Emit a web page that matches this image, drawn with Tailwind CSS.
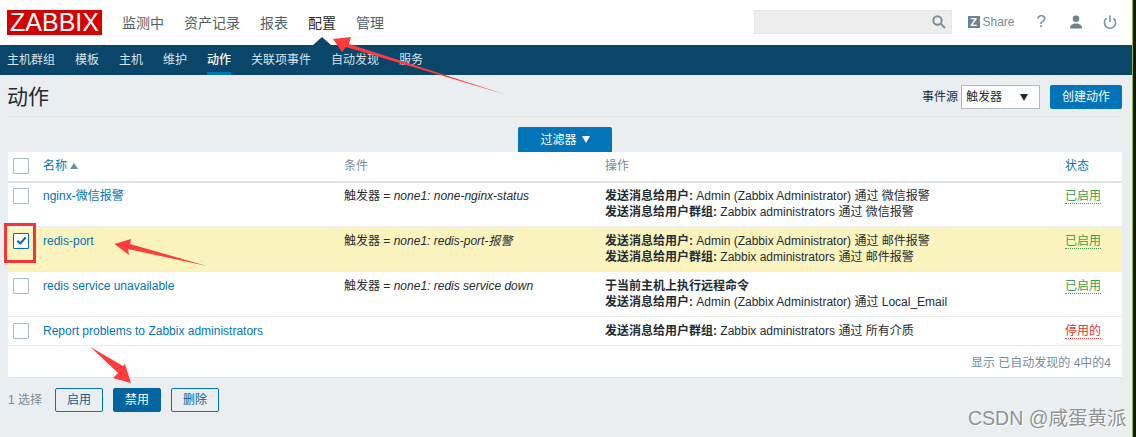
<!DOCTYPE html>
<html lang="zh">
<head>
    <meta charset="UTF-8">
    <title>动作</title>
    <script src="https://cdn.jsdelivr.net/npm/@tailwindcss/browser@4"></script>
</head>
<body class="relative w-[1136px] h-[437px] overflow-hidden bg-[#ebeef0] text-[12px] leading-[16px] text-[#1f2c33] font-['Liberation_Sans','Noto_Sans_CJK_SC',sans-serif]">

    <!-- Top nav -->
    <header class="h-[45px] bg-white flex items-start pl-[7px] pr-[19px]">
        <div class="mt-[10px] w-[95px] h-[25px] bg-[#d40000] text-white text-[25px] leading-[25px] text-center">ZABBIX</div>
        <nav class="ml-[20px] mt-[14px] flex gap-[20px] text-[14px] leading-[18px] text-[#4f5f68]">
            <a>监测中</a>
            <a>资产记录</a>
            <a>报表</a>
            <a class="relative text-[#1f2c33]">配置
                <span class="absolute left-[5px] top-[23px] w-0 h-0 border-x-[9px] border-x-transparent border-b-[8px] border-b-[#0a466a]"></span>
            </a>
            <a>管理</a>
        </nav>
        <div class="ml-auto mt-[10px] flex items-start">
            <div class="w-[198px] h-[24px] bg-[#ededed] border border-[#e4e6e8] flex items-center justify-end pr-[5px]">
                <svg class="w-[14px] h-[14px]" viewBox="0 0 14 14" fill="none" stroke="#7b8c96" stroke-width="2"><circle cx="5.5" cy="5.5" r="4.2"/><path d="M8.6 8.6 13 13"/></svg>
            </div>
            <div class="ml-[16px] h-[24px] flex items-center text-[#768d99]">
                <span class="w-[12px] h-[12px] bg-[#6c8290] text-white text-[11px] leading-[12px] font-bold text-center">Z</span>
                <span class="ml-[3px]">Share</span>
            </div>
            <span class="ml-[22px] h-[24px] text-[17px] leading-[24px] text-[#768d99]">?</span>
            <svg class="ml-[23px] mt-[5px] w-[14px] h-[14px]" viewBox="0 0 14 14" fill="#6c8290"><circle cx="7" cy="3.8" r="3.3"/><path d="M1 13.5c0-3.6 2.6-5 6-5s6 1.4 6 5z"/></svg>
            <svg class="ml-[20px] mt-[5px] w-[14px] h-[14px]" viewBox="0 0 14 14" fill="none" stroke="#768d99" stroke-width="1.5"><path d="M3.6 3.2a5.6 5.6 0 1 0 6.8 0"/><path d="M7 .5v6.5"/></svg>
        </div>
    </header>

    <!-- Sub nav -->
    <nav class="h-[30px] bg-[#0a466a] flex gap-[20px] pl-[7px] text-[#d7e3ea]">
        <a class="pt-[7px]">主机群组</a>
        <a class="pt-[7px]">模板</a>
        <a class="pt-[7px]">主机</a>
        <a class="pt-[7px]">维护</a>
        <a class="pt-[7px] text-white font-medium border-b-[3px] border-[#0275b8]">动作</a>
        <a class="pt-[7px]">关联项事件</a>
        <a class="pt-[7px]">自动发现</a>
        <a class="pt-[7px]">服务</a>
    </nav>

    <!-- Title bar -->
    <div class="mx-[7px] w-[1115px] h-[42px] border-b border-[#e0e4e7] flex items-start justify-between">
        <h1 class="mt-[8px] text-[21px] leading-[28px] font-normal text-[#1f2c33]">动作</h1>
        <div class="mt-[10px] flex items-center">
            <span>事件源</span>
            <div class="ml-[3px] w-[79px] h-[24px] bg-white border border-[#acbbc2] flex items-center justify-between pl-[4px] pr-[11px]">
                <span>触发器</span>
                <span class="w-0 h-0 border-x-[4px] border-x-transparent border-t-[7px] border-t-[#1f2c33]"></span>
            </div>
            <button class="ml-[10px] w-[72px] h-[24px] bg-[#0275b8] text-white rounded-[2px]">创建动作</button>
        </div>
    </div>

    <!-- Filter tab -->
    <div class="h-[35px] pt-[10px] flex justify-center pr-[6px]">
        <button class="w-[94px] h-[25px] bg-[#0275b8] text-white rounded-t-[2px] flex items-center justify-center gap-[5px]">过滤器
            <span class="w-0 h-0 border-x-[4px] border-x-transparent border-t-[7px] border-t-white"></span>
        </button>
    </div>

    <!-- Table -->
    <section class="ml-[8px] w-[1114px] h-[226px] bg-white border-b border-[#dfe4e7]">
        <table class="w-full table-fixed border-collapse">
            <colgroup>
                <col class="w-[30px]"><col class="w-[301px]"><col class="w-[261px]"><col class="w-[460px]"><col class="w-[62px]">
            </colgroup>
            <thead>
                <tr class="h-[30px] border-b-2 border-[#dfe4e7] text-left">
                    <th class="pl-[5px] pb-[1px] font-normal"><span class="block w-[16px] h-[16px] bg-white border border-[#acbbc2] rounded-[1px]"></span></th>
                    <th class="pl-[5px] pb-[2px] font-normal text-[#0275b8]">名称<span class="inline-block ml-[3px] mb-[1px] w-0 h-0 border-x-[4px] border-x-transparent border-b-[6px] border-b-[#768d99]"></span></th>
                    <th class="pl-[5px] pb-[2px] font-normal text-[#768d99]">条件</th>
                    <th class="pl-[5px] pb-[2px] font-normal text-[#768d99]">操作</th>
                    <th class="pl-[5px] pb-[2px] font-normal text-[#0275b8]">状态</th>
                </tr>
            </thead>
            <tbody>
                <tr class="h-[44px] border-b border-[#ebeef0] align-top">
                    <td class="pl-[5px] pt-[5px]"><span class="block w-[16px] h-[16px] bg-white border border-[#acbbc2] rounded-[1px]"></span></td>
                    <td class="pl-[5px] pt-[5px]"><a class="text-[#0275b8]">nginx-微信报警</a></td>
                    <td class="pl-[5px] pt-[5px]">触发器 = <i>none1: none-nginx-status</i></td>
                    <td class="pl-[5px] pt-[5px]"><b>发送消息给用户:</b> Admin (Zabbix Administrator) 通过 微信报警<br><b>发送消息给用户群组:</b> Zabbix administrators 通过 微信报警</td>
                    <td class="pl-[5px] pt-[5px]"><a class="text-[#429e47] border-b border-dotted border-[#429e47]">已启用</a></td>
                </tr>
                <tr class="h-[45px] border-b border-[#ebeef0] align-top bg-[#fbf4bf]">
                    <td class="pl-[5px] pt-[6px]"><span class="flex items-center justify-center w-[16px] h-[16px] bg-white border border-[#0b6ba5] rounded-[1px]">
                        <svg class="w-[11px] h-[11px]" viewBox="0 0 12 12" fill="none" stroke="#0b6ba5" stroke-width="2.4"><path d="M1.5 6.2 4.6 9.2 10.6 2.6"/></svg>
                    </span></td>
                    <td class="pl-[5px] pt-[6px]"><a class="text-[#0275b8]">redis-port</a></td>
                    <td class="pl-[5px] pt-[6px]">触发器 = <i>none1: redis-port-报警</i></td>
                    <td class="pl-[5px] pt-[6px]"><b>发送消息给用户:</b> Admin (Zabbix Administrator) 通过 邮件报警<br><b>发送消息给用户群组:</b> Zabbix administrators 通过 邮件报警</td>
                    <td class="pl-[5px] pt-[6px]"><a class="text-[#429e47] border-b border-dotted border-[#429e47]">已启用</a></td>
                </tr>
                <tr class="h-[45px] border-b border-[#ebeef0] align-top">
                    <td class="pl-[5px] pt-[6px]"><span class="block w-[16px] h-[16px] bg-white border border-[#acbbc2] rounded-[1px]"></span></td>
                    <td class="pl-[5px] pt-[6px]"><a class="text-[#0275b8]">redis service unavailable</a></td>
                    <td class="pl-[5px] pt-[6px]">触发器 = <i>none1: redis service down</i></td>
                    <td class="pl-[5px] pt-[6px]"><b>于当前主机上执行远程命令</b><br><b>发送消息给用户:</b> Admin (Zabbix Administrator) 通过 Local_Email</td>
                    <td class="pl-[5px] pt-[6px]"><a class="text-[#429e47] border-b border-dotted border-[#429e47]">已启用</a></td>
                </tr>
                <tr class="h-[29px] border-b border-[#ebeef0] align-top">
                    <td class="pl-[5px] pt-[6px]"><span class="block w-[16px] h-[16px] bg-white border border-[#acbbc2] rounded-[1px]"></span></td>
                    <td class="pl-[5px] pt-[6px]"><a class="text-[#0275b8]">Report problems to Zabbix administrators</a></td>
                    <td class="pl-[5px] pt-[6px]"></td>
                    <td class="pl-[5px] pt-[6px]"><b>发送消息给用户群组:</b> Zabbix administrators 通过 所有介质</td>
                    <td class="pl-[5px] pt-[6px]"><a class="text-[#e33734] border-b border-dotted border-[#e33734]">停用的</a></td>
                </tr>
            </tbody>
        </table>
        <div class="pt-[9px] pr-[11px] text-right text-[#768d99]">显示 已自动发现的 4中的4</div>
    </section>

    <!-- Action bar -->
    <div class="mt-[10px] ml-[8px] flex items-center gap-[10px]">
        <span class="w-[37px] text-[#768d99]">1 选择</span>
        <button class="w-[48px] h-[24px] border border-[#0275b8] rounded-[2px] text-[#0b5f91]">启用</button>
        <button class="w-[48px] h-[24px] bg-[#02659f] border border-[#02659f] rounded-[2px] text-white">禁用</button>
        <button class="w-[48px] h-[24px] border border-[#0275b8] rounded-[2px] text-[#0b5f91]">删除</button>
    </div>

    <!-- Annotations drawn over the screenshot -->
    <div class="absolute left-[4px] top-[223px] w-[32px] h-[40px] border-[3px] border-[#f53535]"></div>
    <svg class="absolute left-0 top-0 w-[1136px] h-[437px] pointer-events-none" viewBox="0 0 1136 437" fill="#ff3b3b">
        <polygon points="333,39 351,37 349,44 507,95 346,47 342,52"/>
        <polygon points="114.5,244 131,239 130,244 207,266 128,249 129,255"/>
        <polygon points="90.5,347 123,366 125,364 131,383 113,378 118,373"/>
    </svg>
    <div class="absolute left-[968px] top-[407px] text-[19.5px] leading-[22px] whitespace-nowrap text-[#8f9395] [text-shadow:1px_1px_0_#ffffff]">CSDN @咸蛋黄派</div>
    <!-- window edge -->
    <div class="absolute right-0 top-0 w-[4px] h-[437px] bg-[#15170f] border-l border-[#8fb832]"></div>
</body>
</html>
